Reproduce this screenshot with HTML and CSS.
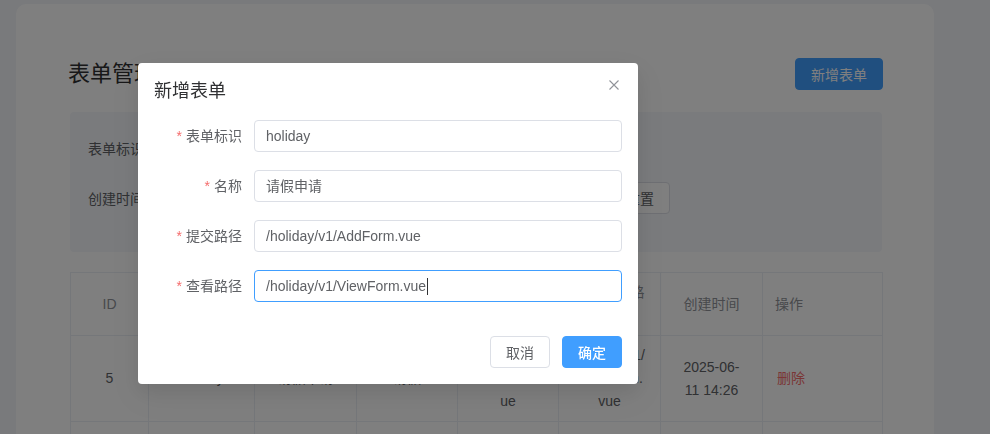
FILE: index.html
```html
<!DOCTYPE html>
<html lang="zh-CN">
<head>
<meta charset="utf-8">
<title>表单管理</title>
<link rel="stylesheet" href="styles.css">
</head>
<body>
<div class="page">
  <div class="card">
    <div class="page-header">
      <h1 class="page-title">表单管理</h1>
      <button class="btn btn-primary btn-add">新增表单</button>
    </div>

    <div class="search">
      <div class="search-row">
        <span class="search-label">表单标识</span>
        <div class="search-input search-input-short"></div>
      </div>
      <div class="search-row">
        <span class="search-label">创建时间</span>
        <div class="search-input search-input-range"></div>
        <button class="btn btn-primary btn-sm">查询</button>
        <button class="btn btn-default btn-sm">重置</button>
      </div>
    </div>

    <table class="data-table">
      <colgroup>
        <col class="c1"><col class="c2"><col class="c3"><col class="c4">
        <col class="c5"><col class="c6"><col class="c7"><col class="c8">
      </colgroup>
      <thead>
        <tr>
          <th>ID</th>
          <th>表单标识</th>
          <th>名称</th>
          <th>描述</th>
          <th>提交组件路径</th>
          <th>视图组件路径</th>
          <th>创建时间</th>
          <th class="left">操作</th>
        </tr>
      </thead>
      <tbody>
        <tr>
          <td>5</td>
          <td>holiday</td>
          <td>请假申请</td>
          <td>请假</td>
          <td>/holiday/v1/<br>AddForm.v<br>ue</td>
          <td>/holiday/v1/<br>ViewForm.<br>vue</td>
          <td>2025-06-<br>11 14:26</td>
          <td class="left"><span class="link-danger">删除</span></td>
        </tr>
        <tr class="row-empty">
          <td></td><td></td><td></td><td></td><td></td><td></td><td></td><td></td>
        </tr>
      </tbody>
    </table>
  </div>
</div>

<div class="overlay"></div>

<div class="dialog" role="dialog">
  <div class="dialog-header">
    <span class="dialog-title">新增表单</span>
    <span class="dialog-close" aria-label="关闭">
      <svg width="10" height="10" viewBox="0 0 10 10"><path d="M0.5 0.5 L9.5 9.5 M9.5 0.5 L0.5 9.5" stroke="#909399" stroke-width="1.1" fill="none"/></svg>
    </span>
  </div>
  <div class="dialog-body">
    <div class="form-item">
      <label class="form-label"><span class="req">*</span>表单标识</label>
      <div class="form-input">holiday</div>
    </div>
    <div class="form-item">
      <label class="form-label"><span class="req">*</span>名称</label>
      <div class="form-input">请假申请</div>
    </div>
    <div class="form-item">
      <label class="form-label"><span class="req">*</span>提交路径</label>
      <div class="form-input">/holiday/v1/AddForm.vue</div>
    </div>
    <div class="form-item">
      <label class="form-label"><span class="req">*</span>查看路径</label>
      <div class="form-input is-focus">/holiday/v1/ViewForm.vue<span class="caret"></span></div>
    </div>
  </div>
  <div class="dialog-footer">
    <button class="btn btn-default btn-sm">取消</button>
    <button class="btn btn-primary btn-sm btn-strong">确定</button>
  </div>
</div>
</body>
</html>
```

FILE: styles.css
```css
* { box-sizing: border-box; }

html, body {
  margin: 0;
  padding: 0;
}

body {
  background: #f2f4f8;
  font-family: "Liberation Sans", "Noto Sans CJK SC", sans-serif;
  font-size: 14px;
  color: #606266;
  overflow: hidden;
}

.page {
  padding: 4px 56px 0 16px;
}

.card {
  background: #ffffff;
  border-radius: 10px;
  padding: 54px 52px 40px 54px;
  min-height: 460px;
}

.page-header {
  display: flex;
  align-items: center;
  justify-content: space-between;
  height: 32px;
}

.page-title {
  margin: 0 0 0 -2px;
  font-size: 22px;
  font-weight: normal;
  color: #303133;
  line-height: 32px;
}

.btn {
  display: inline-flex;
  align-items: center;
  justify-content: center;
  height: 32px;
  border-radius: 4px;
  font-family: inherit;
  font-size: 14px;
  padding: 0;
  border: 1px solid #dcdfe6;
  cursor: pointer;
}

.btn-primary {
  background: #409eff;
  border-color: #409eff;
  color: #ffffff;
}

.btn-default {
  background: #ffffff;
  color: #606266;
}

.btn-add {
  width: 88px;
  margin-right: -1px;
}

.btn-sm {
  width: 60px;
}

.btn-strong {
  font-weight: 500;
}

.search {
  margin-top: 22px;
  height: 140px;
  background: #f5f7fa;
  border-radius: 4px;
  padding: 20px 18px;
  display: flex;
  flex-direction: column;
  gap: 18px;
}

.search-row {
  display: flex;
  align-items: center;
  height: 32px;
  gap: 12px;
}

.search-label {
  width: 56px;
  color: #606266;
}

.search-input {
  height: 32px;
  border: 1px solid #dcdfe6;
  border-radius: 4px;
  background: #ffffff;
}

.search-input-short { width: 220px; }
.search-input-range { width: 370px; }

.data-table {
  margin-top: 20px;
  width: 812px;
  border-collapse: collapse;
  table-layout: fixed;
  line-height: 23px;
}

.c1 { width: 78px; }
.c2 { width: 106px; }
.c3 { width: 102px; }
.c4 { width: 101px; }
.c5 { width: 101px; }
.c6 { width: 102px; }
.c7 { width: 102px; }
.c8 { width: 120px; }

.data-table th,
.data-table td {
  border: 1px solid #ebeef5;
  padding: 8px 12px;
  text-align: center;
  vertical-align: middle;
  word-break: break-all;
}

.data-table th {
  font-weight: normal;
  color: #909399;
}

.data-table td {
  color: #606266;
}

.data-table .left {
  text-align: left;
}

.row-empty td {
  height: 60px;
}

.link-danger {
  color: #f56c6c;
  padding-left: 2px;
}

.overlay {
  position: fixed;
  inset: 0;
  background: rgba(0, 0, 0, 0.5);
}

.dialog {
  position: fixed;
  left: 138px;
  top: 63px;
  width: 500px;
  background: #ffffff;
  border-radius: 4px;
  padding: 16px;
  box-shadow: 0 12px 32px 4px rgba(0, 0, 0, 0.04), 0 8px 20px rgba(0, 0, 0, 0.08);
}

.dialog-header {
  padding-bottom: 17px;
}

.dialog-title {
  font-size: 18px;
  line-height: 24px;
  color: #303133;
}

.dialog-close {
  position: absolute;
  top: 17px;
  right: 19px;
  width: 10px;
  height: 10px;
  display: block;
}

.dialog-close svg { display: block; }

.form-item {
  display: flex;
  height: 32px;
  margin-bottom: 18px;
}

.form-label {
  width: 100px;
  padding-right: 12px;
  text-align: right;
  line-height: 32px;
  color: #606266;
}

.req {
  color: #f56c6c;
  margin-right: 4px;
}

.form-input {
  width: 368px;
  height: 32px;
  border: 1px solid #dcdfe6;
  border-radius: 4px;
  padding: 0 11px;
  line-height: 30px;
  color: #606266;
  white-space: nowrap;
  display: flex;
  align-items: center;
}

.form-input.is-focus {
  border-color: #409eff;
}

.caret {
  display: inline-block;
  width: 1px;
  height: 17px;
  background: #303133;
  margin-left: 1px;
}

.dialog-footer {
  display: flex;
  justify-content: flex-end;
  gap: 12px;
  padding-top: 16px;
}
```
